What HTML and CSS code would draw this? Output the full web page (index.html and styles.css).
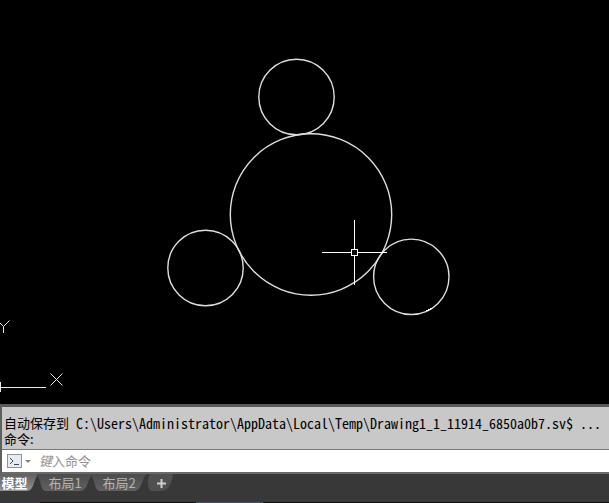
FILE: index.html
```
<!DOCTYPE html>
<html lang="zh-CN">
<head>
    <meta charset="UTF-8">
    <title>Drawing1</title>
    <link rel="stylesheet" href="styles.css">
</head>
<body>
    <!-- 绘图区 -->
    <main class="canvas">
        <svg class="drawing" role="img" aria-label="图形">
            <g class="shape">
                <circle cx="296.5" cy="97" r="37.7"/>
                <circle cx="311" cy="214.5" r="80.7"/>
                <circle cx="205.5" cy="268" r="37.7"/>
                <circle cx="411.3" cy="276.8" r="37.7"/>
            </g>
            <path class="grip" d="M426 310.5h3M428 309.5h3M430 308.5h2"/>
            <!-- 坐标轴 -->
            <g class="axis">
                <path d="M0 387.5H46M0.5 382V392"/>
                <path d="M50.5 373.5L62.5 385.5M62.5 373.5L50.5 385.5"/>
                <path d="M-3 320L3.5 326.5L9.5 320.5M3.5 326.5V333"/>
            </g>
            <!-- 十字光标 -->
            <g class="cursor">
                <path d="M354.5 220V249M354.5 256V285M322 252.5H351M358 252.5H387"/>
                <rect x="351.5" y="249.5" width="6" height="6"/>
            </g>
        </svg>
    </main>
    <!-- 命令行 -->
    <section class="command">
        <div class="history">
            <p>自动保存到 <span class="path">C:\Users\Administrator\AppData\Local\Temp\Drawing1_1_11914_6850a0b7.sv$ ...</span></p>
            <p>命令:</p>
        </div>
        <div class="prompt">
            <button class="prompt-btn" type="button" aria-label="命令">
                <svg width="24" height="14" viewBox="0 0 24 14">
                    <rect class="box" x="0.5" y="0.5" width="14" height="13"/>
                    <path class="mark" d="M3 4L6 7L3 10M7 10.5H12"/>
                    <path class="arrow" d="M18 6H24L21 9Z"/>
                </svg>
            </button>
            <div class="prompt-field">
                <input id="cmd" class="prompt-input" type="text" placeholder=" ">
                <label for="cmd" class="prompt-label"><em>键</em>入命令</label>
            </div>
        </div>
    </section>
    <!-- 布局选项卡 -->
    <nav class="tabs">
        <button class="tab active" type="button">模型</button>
        <button class="tab" type="button">布局1</button>
        <button class="tab" type="button">布局2</button>
        <button class="tab add" type="button" aria-label="新建布局">
            <svg width="9" height="9"><path d="M4.5 0V9M0 4.5H9"/></svg>
        </button>
    </nav>
    <footer class="status"></footer>
</body>
</html>
```
FILE: styles.css
```
body {
    margin: 0;
    height: 100vh;
    display: flex;
    flex-direction: column;
    overflow: hidden;
    background-color: #383838;
    font-family: "Noto Sans CJK SC", sans-serif;
    font-size: 13px;
}

button,
input,
p {
    margin: 0;
    padding: 0;
    border: 0;
    font: inherit;
}

.canvas {
    flex: 1;
    min-height: 0;
    background-color: #000000;
}

.drawing {
    display: block;
    width: 100%;
    height: 100%;
}

.drawing * {
    fill: none;
}

.shape {
    stroke: #dedede;
    stroke-width: 1.4;
}

.axis {
    stroke: #e6e6e6;
}

.cursor,
.grip {
    stroke: #ffffff;
}

.command {
    border-top: 3px solid #5a5a5a;
    border-bottom: 2px solid #6a6a6a;
    border-left: 2px solid #5f5f5f;
}

.history {
    padding: 8px 2px 2px;
    background-color: #c8c8c8;
    border-bottom: 1px solid #7a7a7a;
    color: #000000;
    line-height: 16px;
    white-space: nowrap;
}

.history p {
    display: flex;
    gap: 7px;
}

.path {
    font-family: "Noto Sans Mono CJK SC", "Liberation Mono", monospace;
    font-size: 14px;
}

.prompt {
    display: flex;
    align-items: center;
    gap: 8px;
    height: 22px;
    padding-left: 5px;
    background-color: #ffffff;
}

.prompt-btn {
    display: flex;
    background: none;
}

.prompt-btn .box {
    fill: #e6ebf2;
    stroke: #929292;
}

.prompt-btn .mark {
    fill: none;
    stroke: #3c4654;
}

.prompt-btn .arrow {
    fill: #808080;
}

.prompt-field {
    flex: 1;
    display: grid;
}

.prompt-input,
.prompt-label {
    grid-area: 1 / 1;
    line-height: 20px;
}

.prompt-input {
    outline: none;
    background: none;
}

.prompt-label {
    color: #929292;
    pointer-events: none;
}

.prompt-input:not(:placeholder-shown) + .prompt-label {
    visibility: hidden;
}

.tabs {
    display: flex;
    height: 28px;
}

.tab {
    width: 58px;
    height: 17px;
    line-height: 16px;
    margin-right: -4px;
    background: linear-gradient(#4c4c4c, #606060);
    color: #b4b4b4;
    clip-path: path("M0 0C5 3 4 17 10 17H44C53 17 51 2 58 0Z");
}

.tab.active {
    width: 40px;
    padding-right: 11px;
    background: linear-gradient(#606060, #929292);
    color: #ffffff;
    font-weight: bold;
    clip-path: path("M0 0H40C33 2 35 17 27 17H0Z");
}

.tab.add {
    width: 34px;
    background: #505050;
    clip-path: path("M6 0C3 3 3 17 8 17H17C25 17 28 8 29 0Z");
}

.add path {
    stroke: #d0d0d0;
    stroke-width: 2;
}

.status {
    height: 1px;
    background: linear-gradient(90deg, #30363f 40px, #101010 40px, #101010 196px, #465260 196px, #465260 263px, #101010 263px);
}
```
